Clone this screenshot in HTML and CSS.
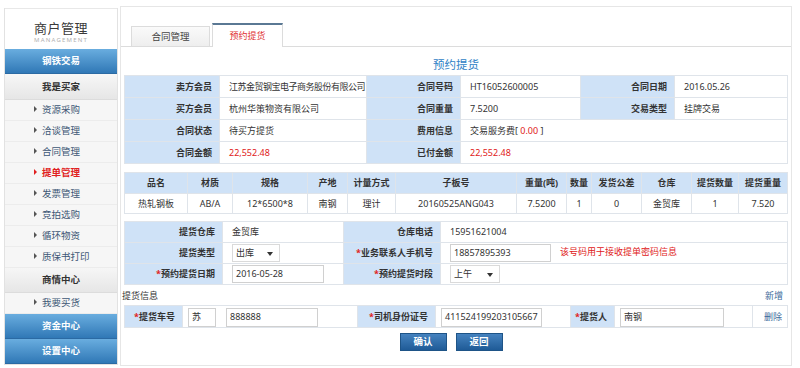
FILE: index.html
```html
<!DOCTYPE html>
<html lang="zh-CN">
<head>
  <meta charset="UTF-8" />
  <title>预约提货 - 商户管理</title>
  <link rel="stylesheet" href="styles.css">
</head>
<body>
  <div class="page">
    <!-- 左侧菜单 -->
    <aside class="side">
      <div class="side-brand">
        <div class="brand-cn">商户管理</div>
        <div class="brand-en">MANAGEMENT</div>
      </div>
      <div class="side-bar">钢铁交易</div>
      <div class="side-group first">我是买家</div>
      <ul class="side-list">
        <li>资源采购</li>
        <li>洽谈管理</li>
        <li>合同管理</li>
        <li class="on">提单管理</li>
        <li>发票管理</li>
        <li>竞拍选购</li>
        <li>循环物资</li>
        <li>质保书打印</li>
      </ul>
      <div class="side-group">商情中心</div>
      <ul class="side-list">
        <li>我要买货</li>
      </ul>
      <div class="side-bar">资金中心</div>
      <div class="side-bar">设置中心</div>
    </aside>

    <!-- 主体 -->
    <main class="panel">
      <div class="tabs">
        <span class="tab">合同管理</span>
        <span class="tab active">预约提货</span>
      </div>

      <div class="content">
        <h3 class="title">预约提货</h3>

        <table class="grid info">
          <colgroup>
            <col style="width:95px"><col style="width:147px">
            <col style="width:94px"><col style="width:120px">
            <col style="width:94px"><col>
          </colgroup>
          <tr>
            <th>卖方会员</th><td class="tight">江苏金贸钢宝电子商务股份有限公司</td>
            <th>合同号码</th><td>HT16052600005</td>
            <th>合同日期</th><td>2016.05.26</td>
          </tr>
          <tr>
            <th>买方会员</th><td>杭州华策物资有限公司</td>
            <th>合同重量</th><td>7.5200</td>
            <th>交易类型</th><td>挂牌交易</td>
          </tr>
          <tr>
            <th>合同状态</th><td>待买方提货</td>
            <th>费用信息</th><td colspan="3">交易服务费[ <span class="red">0.00</span> ]</td>
          </tr>
          <tr>
            <th>合同金额</th><td class="red">22,552.48</td>
            <th>已付金额</th><td colspan="3" class="red">22,552.48</td>
          </tr>
        </table>

        <table class="grid goods">
          <colgroup>
            <col style="width:63px"><col style="width:45px"><col style="width:75px">
            <col style="width:40px"><col style="width:48px"><col style="width:121px">
            <col style="width:50px"><col style="width:25px"><col style="width:50px">
            <col style="width:50px"><col style="width:47px"><col>
          </colgroup>
          <tr>
            <th>品名</th><th>材质</th><th>规格</th><th>产地</th><th>计量方式</th><th>子板号</th>
            <th>重量(吨)</th><th>数量</th><th>发货公差</th><th>仓库</th><th>提货数量</th><th>提货重量</th>
          </tr>
          <tr>
            <td>热轧钢板</td><td>AB/A</td><td>12*6500*8</td><td>南钢</td><td>理计</td><td>20160525ANG043</td>
            <td>7.5200</td><td>1</td><td>0</td><td>金贸库</td><td>1</td><td>7.520</td>
          </tr>
        </table>

        <table class="grid form">
          <colgroup>
            <col style="width:98px"><col style="width:121px">
            <col style="width:97px"><col>
          </colgroup>
          <tr>
            <th>提货仓库</th><td>金贸库</td>
            <th>仓库电话</th><td>15951621004</td>
          </tr>
          <tr>
            <th>提货类型</th><td><span class="select w48">出库</span></td>
            <th><i>*</i>业务联系人手机号</th>
            <td><span class="input w101">18857895393</span><span class="tip">该号码用于接收提单密码信息</span></td>
          </tr>
          <tr>
            <th><i>*</i>预约提货日期</th><td><span class="input w92">2016-05-28</span></td>
            <th><i>*</i>预约提货时段</th><td><span class="select w50">上午</span></td>
          </tr>
        </table>

        <div class="sub-head">
          <span>提货信息</span>
          <a class="link">新增</a>
        </div>

        <table class="grid pick">
          <colgroup>
            <col style="width:58px"><col style="width:175px">
            <col style="width:78px"><col style="width:135px">
            <col style="width:44px"><col style="width:138px"><col>
          </colgroup>
          <tr>
            <th><i>*</i>提货车号</th>
            <td><span class="input w28">苏</span><span class="input w92">888888</span></td>
            <th><i>*</i>司机身份证号</th>
            <td><span class="input w101">411524199203105667</span></td>
            <th><i>*</i>提货人</th>
            <td><span class="input w104">南钢</span></td>
            <td class="del"><a class="link">删除</a></td>
          </tr>
        </table>

        <div class="actions">
          <button class="btn">确认</button>
          <button class="btn">返回</button>
        </div>
      </div>
    </main>
  </div>
</body>
</html>
```

FILE: styles.css
```css
body {
  margin: 0;
  background: #fff;
  font-family: "Noto Sans", "Noto Sans CJK SC", sans-serif;
  font-size: 9px;
  color: #333;
}
.page {
  display: flex;
  align-items: flex-start;
  gap: 2px;
  padding: 6px 8px 0 4px;
}

/* 左侧菜单 */
.side {
  width: 114px;
  margin-top: 2px;
  border: 1px solid #e2e2e2;
  border-top: none;
  background: #f6f6f6;
  box-sizing: border-box;
}
.side-brand {
  height: 41px;
  background: #fff;
  text-align: center;
  border-top: 1px solid #e8e8e8;
  box-sizing: border-box;
  padding-top: 11px;
}
.brand-cn {
  font-size: 13px;
  line-height: 16px;
  color: #3a3a3a;
  letter-spacing: 0.5px;
}
.brand-en {
  font-size: 6px;
  line-height: 8px;
  color: #b0b0b0;
  letter-spacing: 1.2px;
}
.side-bar {
  height: 25px;
  line-height: 24px;
  text-align: center;
  color: #fff;
  font-size: 9.5px;
  font-weight: bold;
  background: linear-gradient(#69addf, #3078b6);
  border-bottom: 1px solid #2b6aa3;
  box-sizing: border-box;
}
.side-group {
  height: 25px;
  line-height: 24px;
  text-align: center;
  font-size: 9.5px;
  font-weight: bold;
  color: #333;
  background: linear-gradient(#f6f6f6, #e6e6e6);
  border-bottom: 1px solid #dcdcdc;
  box-sizing: border-box;
}
.side-group.first {
  margin-top: 1px;
}
.side-list {
  list-style: none;
  margin: 0;
  padding: 0;
}
.side-list li {
  position: relative;
  height: 21px;
  line-height: 20px;
  padding-left: 37px;
  font-size: 9.5px;
  color: #3d5775;
  border-bottom: 1px solid #ececec;
  box-sizing: border-box;
}
.side-list li::before {
  content: "";
  position: absolute;
  left: 29px;
  top: 6px;
  border-left: 3px solid #555;
  border-top: 3px solid transparent;
  border-bottom: 3px solid transparent;
}
.side-list li.on {
  color: #e02020;
  font-weight: bold;
}
.side-list li.on::before {
  border-left-color: #e02020;
}

/* 主体 */
.panel {
  width: 672px;
  height: 360px;
  border: 1px solid #e6e6e6;
  box-sizing: border-box;
}
.tabs {
  height: 40px;
  padding-left: 10px;
  border-bottom: 1px solid #dcdcdc;
  display: flex;
  align-items: flex-end;
  gap: 2px;
  box-sizing: border-box;
}
.tab {
  width: 79px;
  height: 20px;
  line-height: 20px;
  text-align: center;
  font-size: 9.5px;
  color: #444;
  background: linear-gradient(#fafafa, #eeeeee);
  border: 1px solid #dcdcdc;
  border-bottom: none;
  box-sizing: border-box;
}
.tab.active {
  width: 71px;
  height: 24px;
  line-height: 22px;
  margin-bottom: -1px;
  font-size: 9px;
  color: #e03030;
  background: #fff;
  border-top: 2px solid #5a7894;
}
.content {
  padding: 0 3px;
}
.title {
  margin: 8px 0 0;
  height: 20px;
  line-height: 20px;
  text-align: center;
  font-size: 11.5px;
  font-weight: normal;
  color: #2f7fc6;
}

/* 表格 */
.grid {
  width: 664px;
  table-layout: fixed;
  border-collapse: collapse;
  border: 1px solid #dfe4ea;
}
.grid th, .grid td {
  height: 21px;
  padding: 0;
  line-height: 14px;
  border: 1px solid #dfe4ea;
  white-space: nowrap;
  overflow: hidden;
}
.grid th {
  background: #cfe2f7;
  color: #333;
}
.info th, .form th, .pick th {
  text-align: right;
  padding-right: 7px;
}
.info td, .form td {
  padding-left: 9px;
}
.tight {
  letter-spacing: -0.5px;
}
.goods {
  margin-top: 8px;
}
.goods th, .goods td {
  text-align: center;
}
.goods td {
  height: 19px;
}
.goods th {
  height: 20px;
}
.form {
  margin-top: 7px;
}
.form th, .form td {
  height: 20px;
}
.red {
  color: #e02020;
}
.grid i {
  font-style: normal;
  color: #e02020;
}
.tip {
  color: #e02020;
  margin-left: 9px;
}

/* 输入框 */
.input, .select {
  display: inline-block;
  height: 18px;
  line-height: 16px;
  padding: 0 3px;
  border: 1px solid #d0d0d0;
  background: #fff;
  vertical-align: middle;
  box-sizing: border-box;
}
.select {
  position: relative;
  border-color: #dadada;
}
.select::after {
  content: "";
  position: absolute;
  right: 6px;
  top: 7px;
  border-top: 4px solid #333;
  border-left: 3px solid transparent;
  border-right: 3px solid transparent;
}
.w28 { width: 28px; margin-right: 10px; }
.w48 { width: 48px; }
.w50 { width: 50px; }
.w92 { width: 92px; }
.w101 { width: 101px; }
.w104 { width: 104px; }

.sub-head {
  display: flex;
  justify-content: space-between;
  height: 20px;
  padding-top: 3px;
  line-height: 16px;
  padding-right: 5px;
  box-sizing: border-box;
}
.sub-head span {
  margin-left: -2px;
}
.link {
  color: #3a6a9a;
}
.pick td {
  padding-left: 5px;
}
.pick .input {
  height: 19px;
  line-height: 15px;
  vertical-align: top;
  margin-top: 1px;
}
.pick .del {
  text-align: right;
  padding-right: 5px;
}
.actions {
  display: flex;
  justify-content: center;
  gap: 9px;
  margin-top: 5px;
  padding-right: 10px;
}
.btn {
  width: 47px;
  height: 18px;
  padding: 0;
  border: 1px solid #1e5487;
  background: linear-gradient(#4582bf, #1f5b97);
  color: #fff;
  font-family: inherit;
  font-size: 9.5px;
  font-weight: bold;
  line-height: 16px;
}
```
